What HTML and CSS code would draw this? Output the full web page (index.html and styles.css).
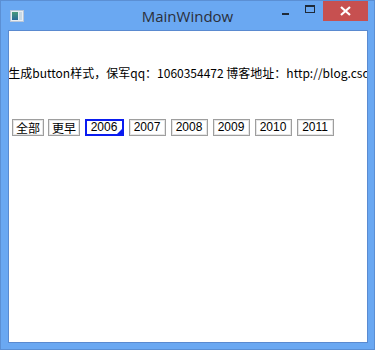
FILE: index.html
```html
<!DOCTYPE html>
<html>
<head>
<meta charset="utf-8">
<link rel="stylesheet" href="styles.css">
</head>
<body>
<div class="window">
  <div class="titlebar">
    <div class="app-icon"><span class="ic-a"></span><span class="ic-b"></span></div>
    <div class="title">MainWindow</div>
    <div class="controls">
      <div class="ctl min"><span></span></div>
      <div class="ctl max"><span></span></div>
      <div class="ctl close">
        <svg width="11" height="10" viewBox="0 0 11 10"><path d="M1 1 L10 9 M10 1 L1 9" stroke="#fff" stroke-width="2.2" fill="none"/></svg>
      </div>
    </div>
  </div>
  <div class="client">
    <div class="info"><span class="info-text">自定义生成button样式，保军qq：1060354472 博客地址：http://blog.csdn.net/</span></div>
    <div class="buttons">
      <button class="btn">全部</button>
      <button class="btn">更早</button>
      <button class="btn year focus">2006</button>
      <button class="btn year">2007</button>
      <button class="btn year">2008</button>
      <button class="btn year">2009</button>
      <button class="btn year">2010</button>
      <button class="btn year">2011</button>
    </div>
  </div>
</div>
</body>
</html>
```
FILE: styles.css
```css
html, body {
  margin: 0;
  padding: 0;
  width: 375px;
  height: 350px;
  overflow: hidden;
}
.window {
  box-sizing: border-box;
  width: 375px;
  height: 350px;
  background: #6aa8f2;
  border: 1px solid #5b8fd4;
  display: flex;
  flex-direction: column;
}
.titlebar {
  height: 29px;
  display: flex;
  align-items: flex-start;
  position: relative;
}
.app-icon {
  margin: 9px 0 0 9px;
  width: 14px;
  height: 12px;
  box-sizing: border-box;
  border: 1px solid #b8c6d8;
  background: #e8eef4;
  display: flex;
  padding: 1px;
  gap: 1px;
}
.ic-a { width: 6px; background: linear-gradient(#4a9a7a, #2a6a9a); }
.ic-b { flex: 1; background: #c8d8e4; }
.title {
  position: absolute;
  left: 0;
  right: 0;
  top: 5px;
  text-align: center;
  font-family: "Open Sans", "Noto Sans", sans-serif;
  font-size: 15px;
  color: #2a2f3a;
  pointer-events: none;
}
.controls {
  margin-left: auto;
  display: flex;
  align-items: flex-start;
}
.ctl {
  height: 20px;
  display: flex;
  align-items: center;
  justify-content: center;
}
.min { width: 24px; }
.min span { width: 7px; height: 2px; background: #1f2a38; margin-top: 6px; }
.max { width: 26px; }
.max span { width: 8px; height: 5px; border: 1px solid #1f2a38; border-top-width: 2px; margin-top: -4px; }
.close {
  width: 45px;
  background: #c75050;
  margin-right: 6px;
}
.client {
  flex: 1;
  margin: 0 6px 6px 7px;
  background: #ffffff;
  border: 1px solid #5a8ad0;
  display: flex;
  flex-direction: column;
  overflow: hidden;
}
.info {
  margin-top: 34px;
  height: 16px;
  display: flex;
  justify-content: center;
  overflow: hidden;
  white-space: nowrap;
}
.info-text {
  flex: none;
  font-family: "Noto Sans CJK SC", "Noto Sans", sans-serif;
  font-size: 12px;
  line-height: 16px;
  color: #000;
  margin-left: 0;
}
.buttons {
  margin-top: 38px;
  display: flex;
  align-items: center;
  padding-left: 1px;
}
.btn {
  box-sizing: border-box;
  height: 17px;
  margin: 0 2px;
  padding: 0 3px;
  background: #ffffff;
  border: 1px solid #9e9e9e;
  box-shadow: inset 0 0 0 1px #e6e6e6;
  font-family: "Noto Sans CJK SC", sans-serif;
  font-size: 12px;
  line-height: 13px;
  color: #000;
  display: flex;
  align-items: center;
  justify-content: center;
}
.btn.year {
  width: 37px;
  margin: 0 2.5px;
  font-family: "Liberation Sans", Arial, sans-serif;
  font-size: 12px;
}
.btn.focus {
  position: relative;
  border: 2px solid #0a1cf0;
  box-shadow: none;
  width: 39px;
}
.btn.focus::after {
  content: "";
  position: absolute;
  right: 0;
  bottom: 0;
  width: 0;
  height: 0;
  border-left: 5px solid transparent;
  border-bottom: 5px solid #0a1cf0;
}
```
